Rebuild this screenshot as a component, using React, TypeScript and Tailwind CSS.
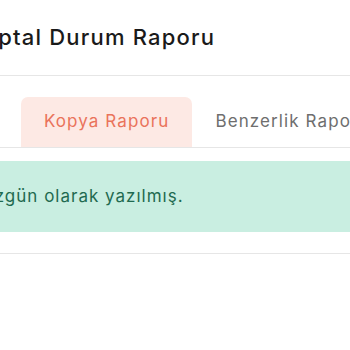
import React from 'react';

const tabs = [
  { label: 'Özet Raporu', active: false },
  { label: 'Kopya Raporu', active: true },
  { label: 'Benzerlik Raporu', active: false },
  { label: 'Kaynaklar', active: false },
];

export default function App() {
  return (
    <div className="w-[350px] h-[350px] overflow-hidden bg-white" style={{ fontFamily: 'Inter, "Noto Sans", sans-serif' }}>
      <div className="-ml-[9px] w-[600px]">
        {/* Header */}
        <div className="h-[76px] flex items-center border-b border-[#e6e6e6]">
          <h1 className="text-[22px] font-medium text-[#1a1a1a] tracking-[1.2px]">İptal Durum Raporu</h1>
        </div>

        {/* Tabs */}
        <div className="pt-[21px] border-b border-[#e6e6e6]">
          <div className="flex -ml-[128px]">
            {tabs.map((tab) => (
              <div
                key={tab.label}
                className={`h-[50px] px-[23px] flex items-center text-[17px] tracking-[1.1px] rounded-t-[7px] ${
                  tab.active ? 'bg-[#fde9e4] text-[#ea735b]' : 'text-[#6e6e6e]'
                }`}
              >
                {tab.label}
              </div>
            ))}
          </div>
        </div>

        {/* Alert */}
        <div className="mt-[13px] h-[71px] bg-[#c9eee1] flex items-center -ml-[83px] pl-[20px]">
          <p className="text-[17px] text-[#1f6a50] tracking-[1px]">Metin özgün olarak yazılmış.</p>
        </div>

        <div className="mt-[21px] border-b border-[#e6e6e6]" />
      </div>
    </div>
  );
}
